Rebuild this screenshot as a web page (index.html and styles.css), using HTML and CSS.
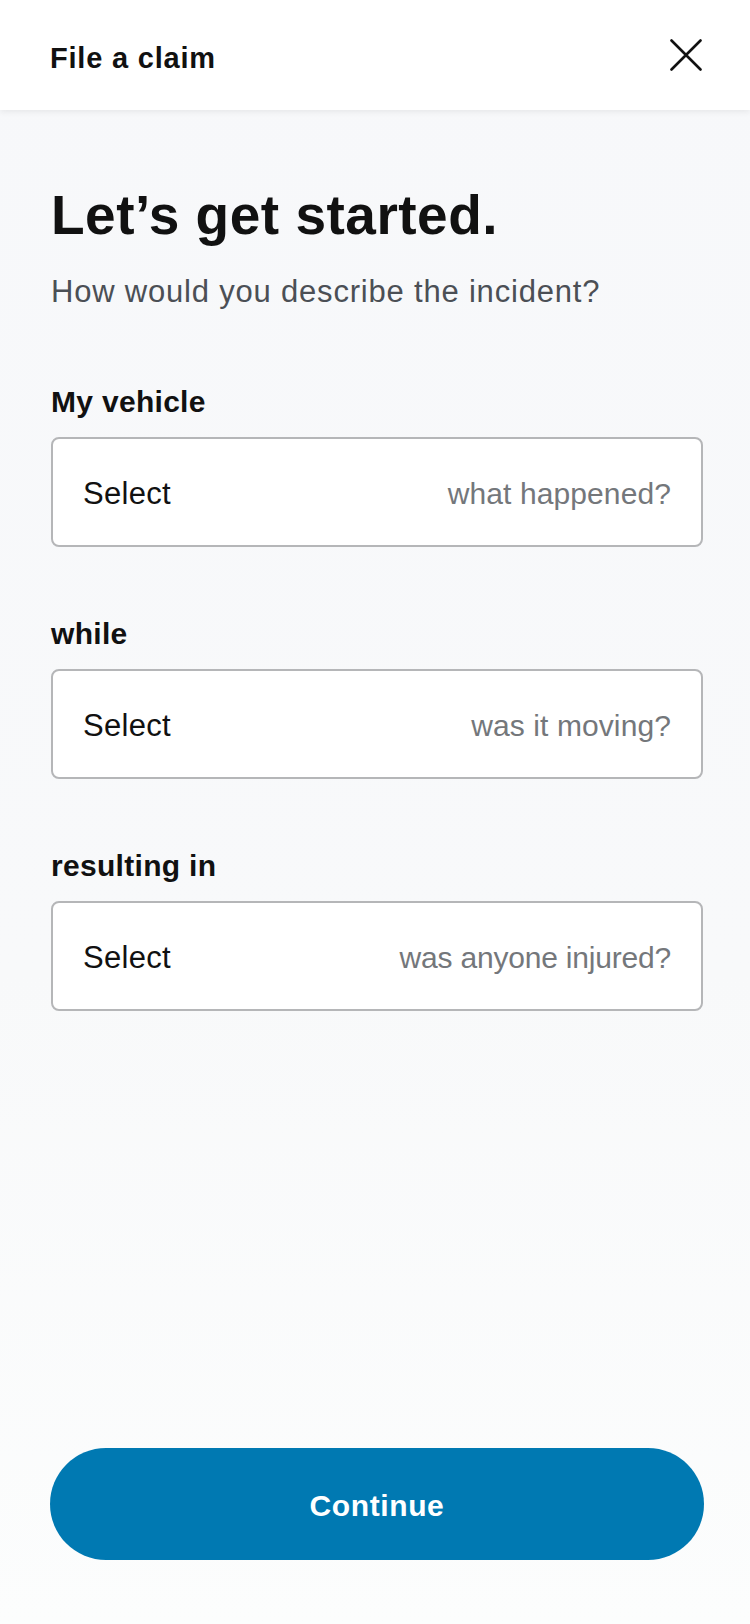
FILE: index.html
```html
<!DOCTYPE html>
<html lang="en">
<head>
<meta charset="utf-8">
<title>File a claim</title>
<link rel="stylesheet" href="styles.css">
</head>
<body>
<div class="screen">
  <header class="topbar">
    <h1 class="topbar-title">File a claim</h1>
    <button class="close" aria-label="Close">
      <svg width="32" height="32" viewBox="0 0 32 32"><path d="M1.5 1.5 L30.5 30.5 M30.5 1.5 L1.5 30.5" stroke="#111" stroke-width="2.6" stroke-linecap="round" fill="none"/></svg>
    </button>
  </header>
  <main class="content">
    <h2 class="heading">Let’s get started.</h2>
    <p class="subtitle">How would you describe the incident?</p>
    <div class="fields">
      <div class="field">
        <div class="label">My vehicle</div>
        <div class="select"><span class="select-text">Select</span><span class="hint">what happened?</span></div>
      </div>
      <div class="field">
        <div class="label">while</div>
        <div class="select"><span class="select-text">Select</span><span class="hint">was it moving?</span></div>
      </div>
      <div class="field">
        <div class="label">resulting in</div>
        <div class="select"><span class="select-text">Select</span><span class="hint hint-narrow">was anyone injured?</span></div>
      </div>
    </div>
  </main>
  <footer class="footer">
    <button class="continue">Continue</button>
  </footer>
</div>
</body>
</html>
```
FILE: styles.css
```css
* { box-sizing: border-box; }
html, body { margin: 0; padding: 0; }
body {
  font-family: "Liberation Sans", Arial, sans-serif;
  color: #111;
  background: #f7f8fa;
}
.screen {
  width: 750px;
  height: 1624px;
  display: flex;
  flex-direction: column;
  background: linear-gradient(#f7f8fa 0%, #f8f9fa 60%, #fcfdfd 100%);
}
.topbar {
  height: 110px;
  flex: 0 0 110px;
  background: #fff;
  display: flex;
  align-items: center;
  justify-content: space-between;
  padding: 0 48px 0 50px;
  box-shadow: 0 2px 6px rgba(0,0,0,0.07);
  position: relative;
  z-index: 1;
}
.topbar-title {
  margin: 0;
  font-size: 29px;
  font-weight: 700;
  line-height: 29px;
  letter-spacing: 0.8px;
  padding-top: 6px;
}
.close {
  background: none;
  border: 0;
  padding: 0;
  width: 32px;
  height: 32px;
  display: flex;
}
.content {
  flex: 1;
  padding: 78px 47px 0 51px;
  display: flex;
  flex-direction: column;
}
.heading {
  margin: 0;
  font-size: 55px;
  line-height: 55px;
  font-weight: 700;
  letter-spacing: 0.5px;
}
.subtitle {
  margin: 33px 0 0;
  font-size: 31px;
  line-height: 31px;
  color: #4b4f55;
  letter-spacing: 0.8px;
}
.fields {
  margin-top: 80px;
  display: flex;
  flex-direction: column;
  gap: 72px;
}
.field {
  display: flex;
  flex-direction: column;
  gap: 20px;
}
.label {
  font-size: 30px;
  line-height: 30px;
  font-weight: 700;
  letter-spacing: 0.3px;
}
.select {
  height: 110px;
  background: #fff;
  border: 2px solid #b5b6b8;
  border-radius: 8px;
  display: flex;
  align-items: center;
  justify-content: space-between;
  padding: 3px 30px 0 30px;
}
.select-text {
  font-size: 31px;
  color: #111;
  letter-spacing: 0.3px;
}
.hint {
  font-size: 30px;
  color: #74777b;
  letter-spacing: 0.1px;
}
.hint-narrow {
  letter-spacing: -0.2px;
}
.footer {
  padding: 0 46px 64px 50px;
}
.continue {
  width: 654px;
  height: 112px;
  border: 0;
  border-radius: 56px;
  background: #0079b2;
  color: #fff;
  font-family: "Liberation Sans", Arial, sans-serif;
  font-size: 30px;
  font-weight: 700;
  letter-spacing: 0.6px;
  padding-top: 4px;
  display: block;
}
```
